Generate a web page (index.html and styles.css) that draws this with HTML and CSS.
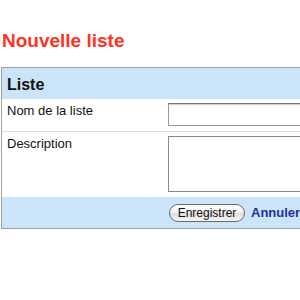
FILE: index.html
```html
<!DOCTYPE html>
<html lang="fr">
<head>
    <meta charset="UTF-8">
    <title>Nouvelle liste</title>
    <link rel="stylesheet" href="styles.css">
</head>
<body>
<h1 class="page-title">Nouvelle liste</h1>
<form class="list-form">
    <div class="form-head">Liste</div>
    <div class="form-row row-name">
        <label class="form-label" for="name">Nom de la liste</label>
        <input class="form-input" type="text" id="name">
    </div>
    <div class="form-row row-desc">
        <label class="form-label" for="desc">Description</label>
        <textarea class="form-area" id="desc"></textarea>
    </div>
    <div class="form-foot">
        <button class="btn-save" type="button">Enregistrer</button>
        <a class="link-cancel" href="#">Annuler</a>
    </div>
</form>
</body>
</html>
```

FILE: styles.css
```css
html, body {
    overflow: hidden;
}
body {
    margin: 0;
    padding: 0 0 0 1px;
    font-family: "Liberation Sans", Arial, sans-serif;
    color: #111;
}
.page-title {
    margin: 0;
    padding: 30px 0 0 1px;
    height: 37px;
    font-size: 19px;
    line-height: 22px;
    font-weight: bold;
    color: #ff3322;
}
.list-form {
    width: 420px;
    border: 1px solid #a0a0a0;
}
.form-head {
    height: 31px;
    padding-left: 5px;
    background: #cce4f9;
    font-size: 16px;
    font-weight: bold;
    line-height: 33px;
}
.form-row {
    display: grid;
    grid-template-columns: 166px 1fr;
    background: #fff;
}
.row-name {
    height: 32px;
    border-bottom: 1px solid #dcdcdc;
}
.row-desc {
    height: 65px;
}
.form-label {
    padding: 4px 0 0 5px;
    font-size: 13px;
    line-height: 16px;
}
.form-input {
    margin-top: 4px;
    height: 23px;
    box-sizing: border-box;
    border: 1px solid #9a9a9a;
    border-top-color: #777;
    box-shadow: inset 0 1px 1px #ccc;
}
.form-area {
    margin-top: 4px;
    height: 56px;
    box-sizing: border-box;
    border: 1px solid #8a8a8a;
    resize: none;
}
.form-foot {
    display: flex;
    align-items: center;
    height: 31px;
    padding-left: 167px;
    background: #cce4f9;
}
.btn-save {
    height: 18px;
    width: 76px;
    padding: 0;
    border: 1px solid #6a6a6a;
    border-radius: 9px;
    background: linear-gradient(#ffffff, #f0f0f0 50%, #dcdcdc 51%, #f6f6f6);
    font-family: "Liberation Sans", Arial, sans-serif;
    font-size: 12px;
    color: #111;
}
.link-cancel {
    margin-left: 6px;
    font-size: 13px;
    font-weight: bold;
    color: #1a3399;
    text-decoration: none;
}
```
